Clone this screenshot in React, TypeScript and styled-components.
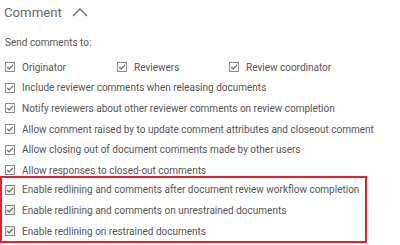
import React from "react";
import styled, { createGlobalStyle } from "styled-components";

const Global = createGlobalStyle`
  html, body { margin: 0; padding: 0; background: #fff; }
  body { font-family: Roboto, "Liberation Sans", sans-serif; color: #555; }
`;

const Page = styled.div`
  width: 400px;
  height: 245px;
  overflow: hidden;
  display: flex;
  flex-direction: column;
`;

const Header = styled.div`
  display: flex;
  align-items: center;
  gap: 10px;
  padding: 2px 0 0 4px;
  height: 20px;
  font-size: 13.2px;
  color: #666;
`;

const Label = styled.div`
  font-size: 10px;
  color: #555;
  padding: 15px 0 0 5px;
  height: 13px;
`;

const List = styled.div`
  display: flex;
  flex-direction: column;
  padding-top: 7px;
`;

const InlineRow = styled.div`
  display: grid;
  grid-template-columns: 112px 112px 1fr;
  padding-left: 5px;
`;

const Item = styled.label<{ $pad?: number }>`
  display: flex;
  align-items: center;
  gap: 7px;
  height: 20.6px;
  font-size: 10px;
  color: #555;
  white-space: nowrap;
  padding-left: ${(p) => p.$pad ?? 0}px;
`;

const Highlight = styled.div`
  border: 2px solid #e3202e;
  width: 367px;
  box-sizing: border-box;
  margin-top: -5px;
  padding: 2px 0 0 3px;
  display: flex;
  flex-direction: column;
`;

const Box = ({ active }: { active?: boolean }) => (
  <svg width="10" height="10" viewBox="0 0 10 10" style={{ flex: "none" }}>
    <rect x="0.5" y="0.5" width="9" height="9" fill={active ? "#eeeeee" : "#fff"} stroke="#8a8a8a" />
    <path d="M2.2 4.9 L4.1 6.9 L8 2.8" fill="none" stroke="#666" strokeWidth="1.2" />
  </svg>
);

const Chevron = () => (
  <svg width="16" height="10" viewBox="0 0 16 10">
    <path d="M1 9 L8 2 L15 9" fill="none" stroke="#666" strokeWidth="1.3" />
  </svg>
);

const rows = [
  "Include reviewer comments when releasing documents",
  "Notify reviewers about other reviewer comments on review completion",
  "Allow comment raised by to update comment attributes and closeout comment",
  "Allow closing out of document comments made by other users",
  "Allow responses to closed-out comments",
];

const redRows = [
  "Enable redlining and comments after document review workflow completion",
  "Enable redlining and comments on unrestrained documents",
  "Enable redlining on restrained documents",
];

export default function App() {
  return (
    <Page>
      <Global />
      <Header>
        <span>Comment</span>
        <Chevron />
      </Header>
      <Label>Send comments to:</Label>
      <List>
        <InlineRow>
          <Item><Box />Originator</Item>
          <Item><Box />Reviewers</Item>
          <Item><Box />Review coordinator</Item>
        </InlineRow>
        {rows.map((r) => (
          <Item key={r} $pad={5}><Box />{r}</Item>
        ))}
        <Highlight>
          {redRows.map((r) => (
            <Item key={r}><Box active />{r}</Item>
          ))}
        </Highlight>
      </List>
    </Page>
  );
}
